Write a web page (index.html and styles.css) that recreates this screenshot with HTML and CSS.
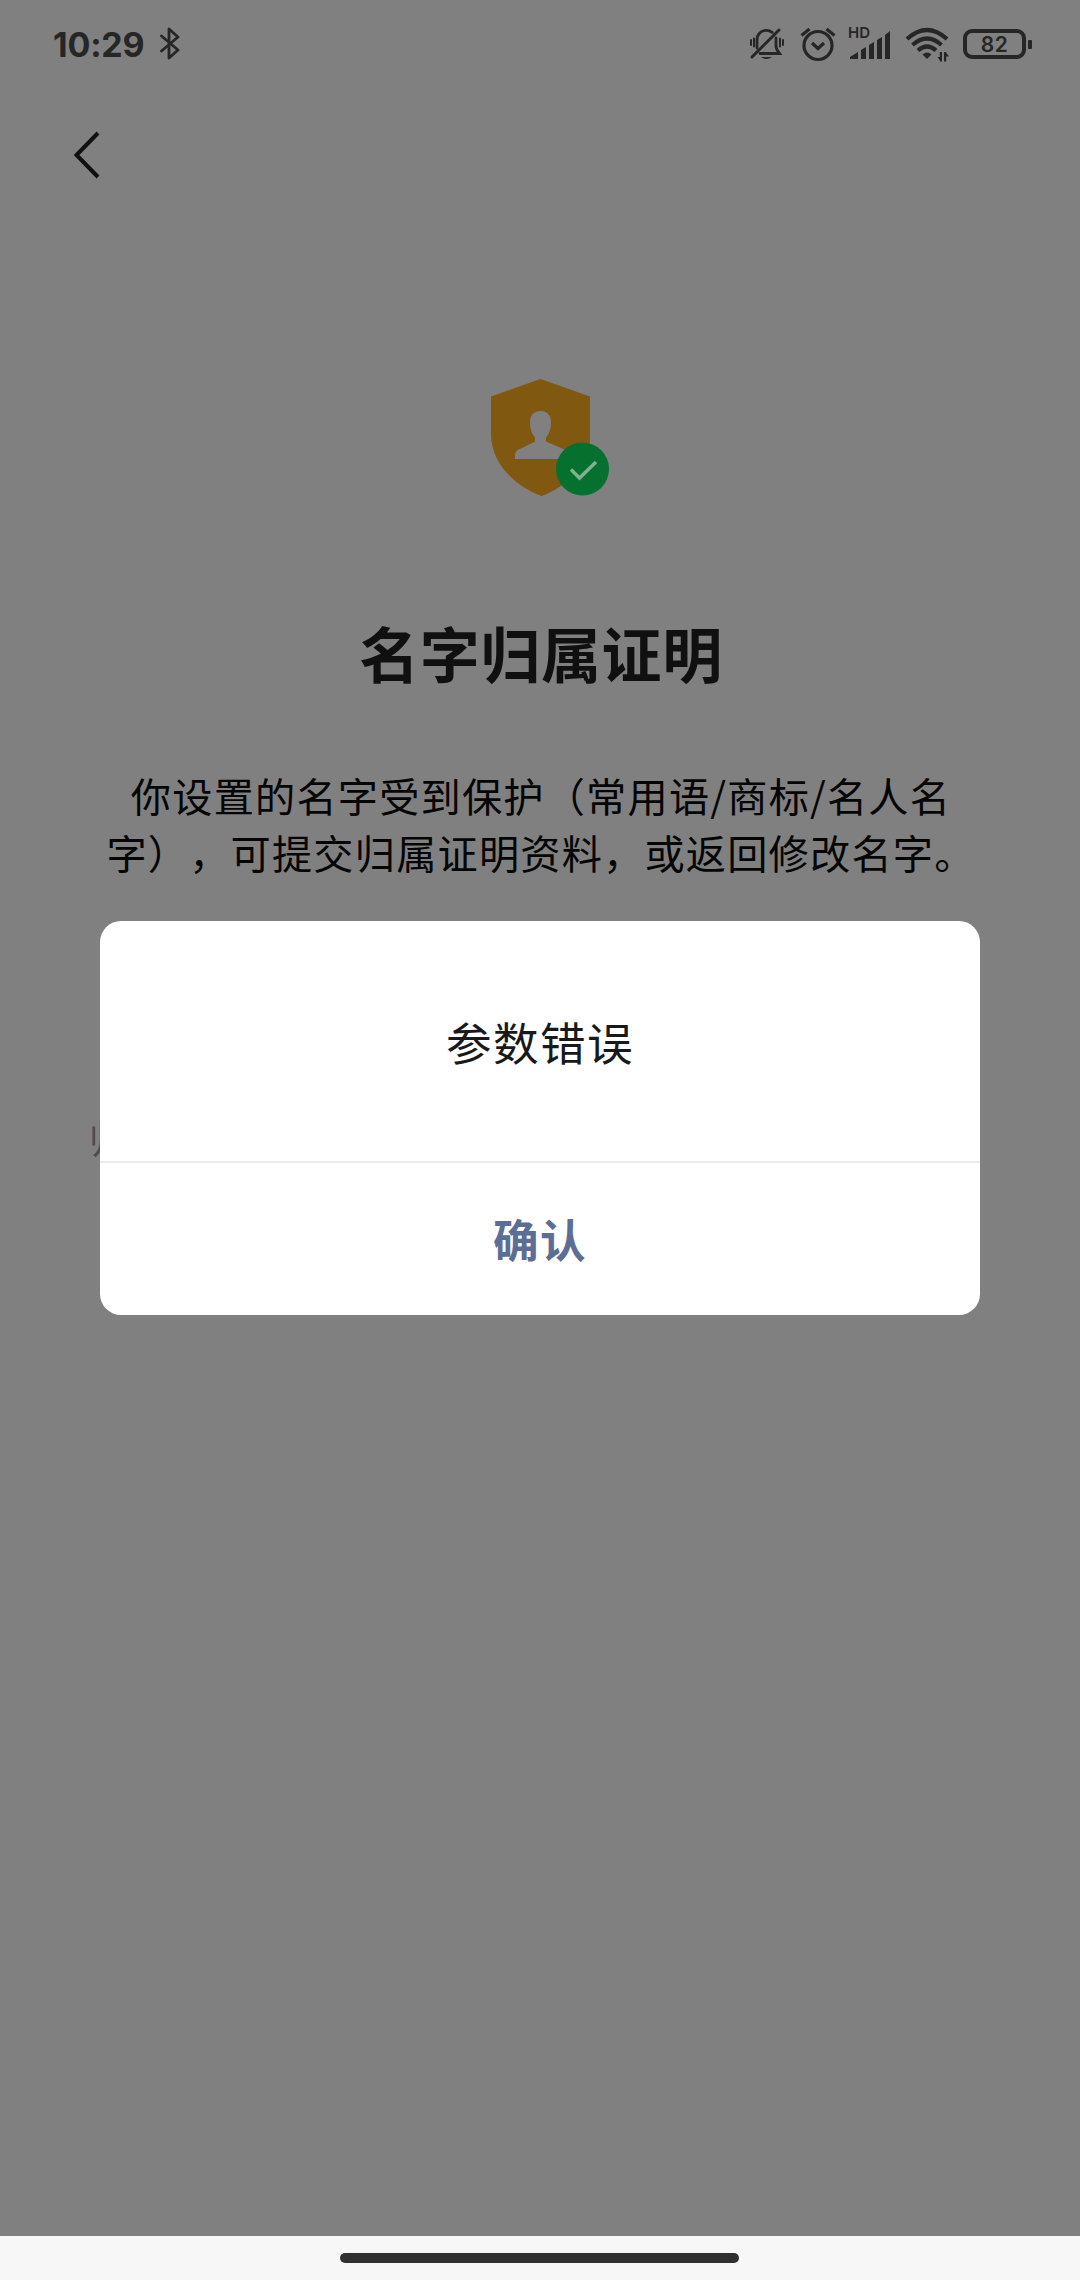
FILE: index.html
```html
<!DOCTYPE html>
<html lang="zh-CN">
<head>
<meta charset="utf-8">
<title>名字归属证明</title>
<link rel="stylesheet" href="styles.css">
</head>
<body>
<div class="screen">
  <header class="status">
    <div class="status-left">
      <span class="clock">10:29</span>
      <svg width="20" height="36" viewBox="0 0 20 36" fill="none" stroke="#262626" stroke-width="2.8" stroke-linejoin="round" stroke-linecap="round"><path d="M1.500 10 18 24 9 32V3L18 11 1.500 25"/></svg>
    </div>
    <div class="status-right">
      <svg class="bell" width="36" height="36" viewBox="0 0 36 36" fill="none" stroke="#262626" stroke-width="2.8" stroke-linecap="round"><path d="M8 22V14C8 8 12 4.300 17.500 4.300c2.500 0 4 .7 5.700 2M27 12v8c0 3 1 4.500 3.500 7.500H11"/><path d="M30 4 3 31" stroke-width="3"/><path d="M2 14v5M5 12.500v8M31 12.500v8M34 14v5" stroke-width="2"/><path d="M12 31h11q-5.500 4-11 0Z" fill="#262626" stroke="none"/></svg>
      <svg class="alarm" width="36" height="36" viewBox="0 0 36 36" fill="none" stroke="#262626" stroke-width="3.200"><circle cx="18" cy="19.500" r="14"/><path d="m12 17 6 5.500 6-5.500M1.500 9.500 9.500 3M26.500 3l8 6.500"/></svg>
      <div class="signal">
        <svg width="42" height="36" viewBox="0 0 42 36" fill="#262626"><path d="M1 33v-2l8-5v7ZM12 33V24l5-3v12ZM20 33V19l5-3v17ZM28 33V14l5-3v22ZM36 33V9l5-4v28Z"/></svg>
        <span class="hd">HD</span>
      </div>
      <svg class="wifi" width="44" height="36" viewBox="0 0 44 36" fill="none" stroke="#262626" stroke-width="4.200"><path d="M2 13Q22-5 42 13M7.500 19Q22 6 36.500 19M13 24.500q9-8 18 0"/><path d="m17.500 28.500q4.500-4 9 0L22 33Z" fill="#262626" stroke="none"/><path d="M37 26v9.500h-2.200V26ZM39 26h2.200v9.500H39ZM41 26.500l3 4h-3ZM32.500 31h3v4.500Z" fill="#262626" stroke="none"/></svg>
      <div class="battery"><span class="battery-body">82</span><span class="battery-tip"></span></div>
    </div>
  </header>
  <nav class="nav">
    <svg width="28" height="50" viewBox="0 0 28 50" fill="none" stroke="#101010" stroke-width="4"><path d="M25 3 3.500 25 25 47"/></svg>
  </nav>
  <main class="content">
    <svg class="shield" width="120" height="120" viewBox="0 0 120 120">
      <path d="M50.500 1 100 18.500V60C100 88 76 109 51.500 118 26 109 1 86 1 56V18.500Z" fill="#80580f"/>
      <path d="M50.500 33C57 33 61 37 61 44c0 7-2 12-5 15.500v4L71 70c5 2 7 4 7 8v3H25v-3c0-4 2-6 7-8l13-6.500v-4C42 56 40 51 40 44 40 37 44 33 50.500 33Z" fill="#808080"/>
      <circle cx="92.500" cy="91" r="26.500" fill="#06702f"/>
      <path d="m81 91.500 8.500 8.500L106 84" fill="none" stroke="#82b192" stroke-width="3.400"/>
    </svg>
    <h1>名字归属证明</h1>
    <p class="intro">你设置的名字受到保护（常用语/商标/名人名字），可提交归属证明资料，或返回修改名字。</p>
    <p class="link">归</p>
  </main>
  <footer class="home"><span></span></footer>
  <div class="dialog" role="alertdialog">
    <p class="message">参数错误</p>
    <button class="confirm">确认</button>
  </div>
</div>
</body>
</html>
```
FILE: styles.css
```css
* { box-sizing: border-box; }
body { margin: 0; }
.screen {
  position: relative;
  width: 1080px;
  height: 2280px;
  display: flex;
  flex-direction: column;
  background: #808080;
  font-family: "Noto Sans CJK SC", sans-serif;
  text-spacing-trim: space-all;
  color: #050505;
}
svg { display: block; flex: none; }
.status {
  height: 88px;
  padding: 0 48px 0 53px;
  display: flex;
  align-items: center;
  justify-content: space-between;
  color: #262626;
  font-family: Inter, sans-serif;
}
.status-left, .status-right { display: flex; align-items: center; }
.status-left { gap: 16px; }
.clock { font-size: 34px; line-height: 40px; font-weight: 650; letter-spacing: -.2px; padding-top: 1px; }
.alarm { margin-left: 15px; }
.signal { position: relative; margin-left: 13px; }
.hd {
  position: absolute;
  left: -1px;
  top: -2px;
  font-size: 15px;
  line-height: 17px;
  font-weight: 600;
}
.wifi { margin-left: 14px; }
.battery { display: flex; align-items: center; margin-left: 14px; gap: 2px; }
.battery-body {
  width: 63px;
  height: 30px;
  border: 4px solid #262626;
  border-radius: 9px;
  text-align: center;
  font-size: 21px;
  line-height: 23px;
  font-weight: 600;
  letter-spacing: .5px;
}
.battery-tip { width: 4px; height: 9px; border-radius: 1px; background: #262626; }
.nav { height: 132px; padding: 42px 0 0 73px; }
.content {
  flex: 1;
  padding: 158px 96px 0;
  display: flex;
  flex-direction: column;
}
.shield { margin-left: 394px; }
h1 {
  margin: 109px 0 0 2px;
  text-align: center;
  font-size: 60px;
  letter-spacing: .6px;
  line-height: 90px;
  font-weight: 700;
  color: #101010;
}
.intro {
  margin: 69px 0 0 2px;
  text-align: center;
  font-size: 40.2px;
  letter-spacing: 1.2px;
  line-height: 57px;
}
.link { margin: 233px 0 0 -7px; font-size: 37px; line-height: 50px; color: #4d4d4d; }
.home {
  height: 44px;
  padding-top: 17px;
  background: #f7f7f7;
}
.home span {
  display: block;
  width: 399px;
  height: 10px;
  margin-left: 340px;
  border-radius: 5px;
  background: #303030;
}
.dialog {
  position: absolute;
  left: 100px;
  top: 921px;
  width: 880px;
  height: 394px;
  display: flex;
  flex-direction: column;
  border-radius: 21px;
  background: #fff;
  overflow: hidden;
}
.message {
  height: 240px;
  margin: 0;
  text-align: center;
  font-size: 45.6px;
  letter-spacing: 1.4px;
  line-height: 240px;
  color: #191919;
}
.confirm {
  flex: 1;
  padding: 0 0 2px;
  border: 0;
  border-top: 2px solid #ebebeb;
  background: none;
  font: 700 45.6px/150px "Noto Sans CJK SC", sans-serif;
  letter-spacing: 1.4px;
  color: #5d6e94;
}
```
